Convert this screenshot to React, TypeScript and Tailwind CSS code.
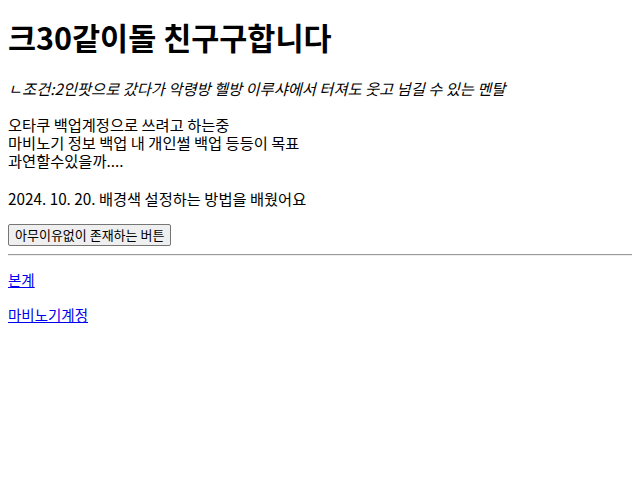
import React from "react";

const FONT = { fontFamily: '"Noto Sans CJK KR", "Noto Sans", sans-serif' };

export default function App() {
  return (
    <div className="min-h-[480px] bg-white px-2 text-black" style={FONT}>
      <h1 className="pt-[17px] text-[30.5px] font-bold leading-[40px]">크30같이돌 친구구합니다</h1>

      <p className="mt-[22px] text-[15.3px] italic leading-[18px]">
        ㄴ조건:2인팟으로 갔다가 악령방 헬방 이루샤에서 터져도 웃고 넘길 수 있는 멘탈
      </p>

      <div className="mt-[18px] flex flex-col text-[15.3px] leading-[18px]">
        <span>오타쿠 백업계정으로 쓰려고 하는중</span>
        <span>마비노기 정보 백업 내 개인썰 백업 등등이 목표</span>
        <span>과연할수있을까....</span>
      </div>

      <p className="mt-[20px] text-[15.3px] leading-[18px]">2024. 10. 20. 배경색 설정하는 방법을 배웠어요</p>

      <button className="mt-[17px] h-[22px] rounded-[2px] border border-[#767676] bg-[#efefef] px-[6px] text-[13px] leading-[18px]">
        아무이유없이 존재하는 버튼
      </button>

      <hr className="mt-[8px] border-t border-b border-t-[#9a9a9a] border-b-[#eeeeee]" />

      <p className="mt-[15px] text-[14.5px] leading-[18px]">
        <a href="#" className="text-[#0000ee] underline">본계</a>
      </p>
      <p className="mt-[17px] text-[14.5px] leading-[18px]">
        <a href="#" className="text-[#0000ee] underline">마비노기계정</a>
      </p>
    </div>
  );
}
